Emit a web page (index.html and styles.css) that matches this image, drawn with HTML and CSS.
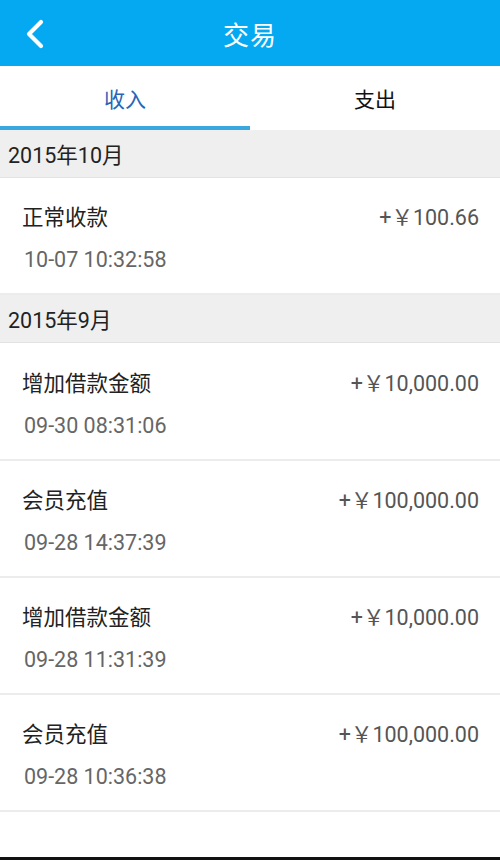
FILE: index.html
```html
<!DOCTYPE html>
<html lang="zh-CN">
<head>
<meta charset="utf-8">
<title>交易</title>
<link rel="stylesheet" href="styles.css">
</head>
<body>
<div class="page">
  <header class="topbar">
    <span class="back">
      <svg width="22" height="30" viewBox="0 0 22 30"><path d="M17 3 L5 15 L17 27" fill="none" stroke="#fff" stroke-width="4.2" stroke-linecap="round" stroke-linejoin="round"/></svg>
    </span>
    <h1 class="title">交易</h1>
  </header>
  <nav class="tabs">
    <div class="tab active">收入</div>
    <div class="tab">支出</div>
  </nav>
  <main class="list">
    <div class="section">2015年10月</div>
    <div class="row">
      <div class="line1"><span class="name">正常收款</span><span class="amount">+￥100.66</span></div>
      <div class="time">10-07 10:32:58</div>
    </div>
    <div class="section">2015年9月</div>
    <div class="row first">
      <div class="line1"><span class="name">增加借款金额</span><span class="amount">+￥10,000.00</span></div>
      <div class="time">09-30 08:31:06</div>
    </div>
    <div class="row">
      <div class="line1"><span class="name">会员充值</span><span class="amount">+￥100,000.00</span></div>
      <div class="time">09-28 14:37:39</div>
    </div>
    <div class="row">
      <div class="line1"><span class="name">增加借款金额</span><span class="amount">+￥10,000.00</span></div>
      <div class="time">09-28 11:31:39</div>
    </div>
    <div class="row">
      <div class="line1"><span class="name">会员充值</span><span class="amount">+￥100,000.00</span></div>
      <div class="time">09-28 10:36:38</div>
    </div>
  </main>
  <div class="bottom-edge"></div>
</div>
</body>
</html>
```
FILE: styles.css
```css
* { box-sizing: border-box; }
html, body { margin: 0; padding: 0; }
body {
  background: #fff;
  font-family: Roboto, "Noto Sans CJK SC", sans-serif;
  color: #222;
}
.page {
  width: 500px;
  height: 860px;
  display: flex;
  flex-direction: column;
  overflow: hidden;
}
.topbar {
  height: 66px;
  background: #05a9f2;
  display: flex;
  align-items: center;
  justify-content: center;
  position: relative;
  flex: none;
}
.back {
  position: absolute;
  left: 24px;
  top: 19px;
  width: 22px;
  height: 30px;
  display: block;
}
.back svg { display: block; }
.title {
  margin: 0;
  font-size: 26px;
  font-weight: 400;
  color: #fff;
  letter-spacing: 1px;
}
.tabs {
  height: 64px;
  display: flex;
  flex: none;
  background: #fff;
}
.tab {
  flex: 1;
  display: flex;
  align-items: center;
  justify-content: center;
  font-size: 21px;
  color: #111;
  border-bottom: 4px solid transparent;
  padding-top: 4px;
}
.tab.active {
  color: #2a64b6;
  border-bottom-color: #3aa7de;
}
.list { flex: 1; }
.section {
  height: 48px;
  background: #efefef;
  border-bottom: 1px solid #e3e3e3;
  display: flex;
  align-items: center;
  padding-left: 8px;
  font-size: 21.5px;
  color: #222;
}
.row {
  height: 117px;
  padding: 24px 21px 0 22px;
  border-bottom: 2px solid #ececec;
}
.row.first {
  height: 118px;
  padding-top: 25px;
}
.line1 {
  display: flex;
  justify-content: space-between;
  align-items: center;
  height: 26px;
}
.name {
  font-size: 21.5px;
  color: #222;
}
.amount {
  font-size: 21.5px;
  color: #555;
}
.time {
  margin-top: 19px;
  padding-left: 2px;
  height: 26px;
  line-height: 26px;
  font-size: 21.5px;
  color: #666;
}
.bottom-edge {
  height: 3px;
  background: #111;
  flex: none;
}
```
